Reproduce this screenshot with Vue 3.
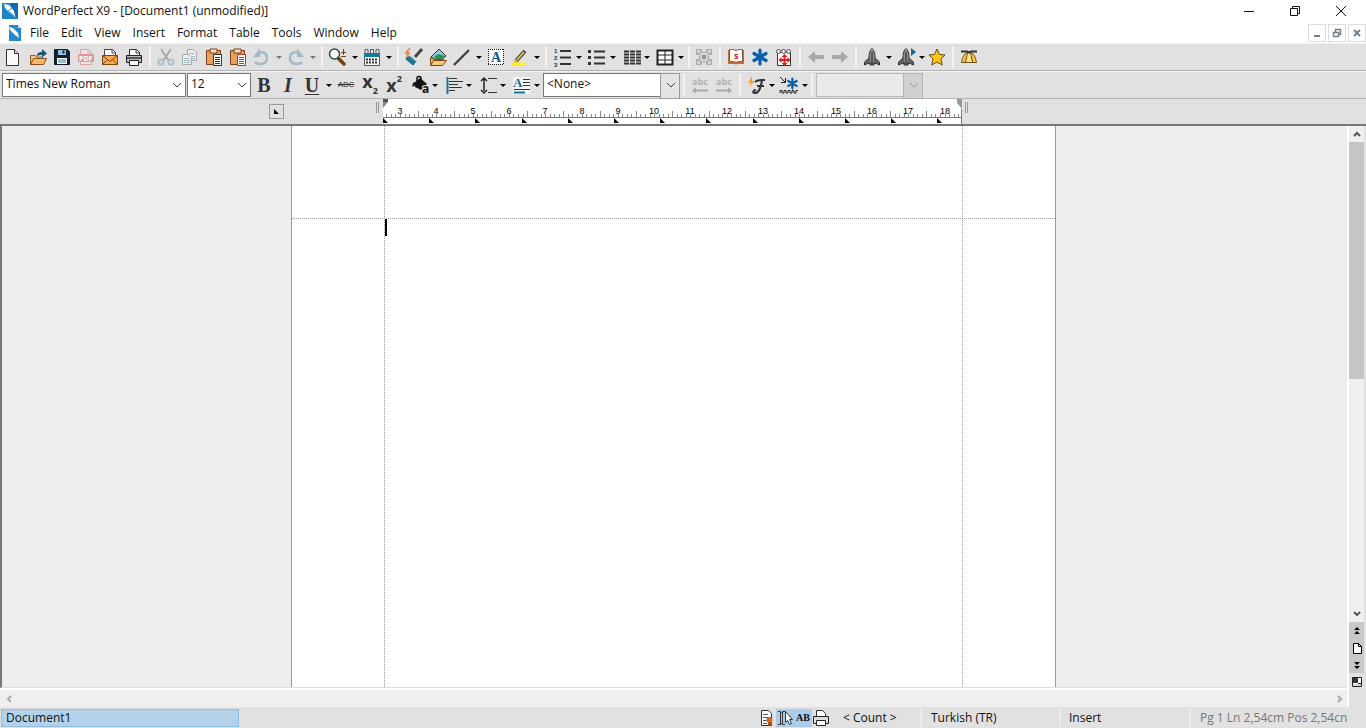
<script setup>
const menus = ['File', 'Edit', 'View', 'Insert', 'Format', 'Table', 'Tools', 'Window', 'Help']

const clip = (paper) => `<path d="M4.500 5.500h14v14h-14z" fill="#e9a05a" stroke="#7a3f14"/><path d="M8 4h7v4H8z" fill="#f6dfc2" stroke="#7a3f14"/><path d="M11.500 9.500h8v11h-8z" fill="#fff" stroke="${paper}"/><path d="M13 12.500h5M13 14.500h5M13 16.500h5M13 18.500h5" stroke="${paper}"/>`
const rocket = '<path d="M12 3.500c-3 3-3 6-3 10v5h6v-5c0-4 0-7-3-10z" fill="#8c8c8c" stroke="#333"/><path d="M9 13l-4.500 4v3l4.500-2M15 13l4.500 4v3L15 18M10 18h4v2h-4z" fill="#666" stroke="#333"/><path d="M12 7v10" stroke="#444" stroke-width="1.500"/>'
const star6 = '<path d="M12 5v14M6 8.500l12 7M18 8.500l-12 7" stroke="#0b5fa8" stroke-width="3.200" stroke-linecap="round"/>'

const icons = {
  blank: '<path d="M6.500 4.500h8l4 4v12h-12z" fill="#fafafa" stroke="#333"/><path d="M14.500 4.500v4h4" fill="#ddd" stroke="#333"/>',
  open: '<path d="M4.500 19.500v-9h5l1 1.500h6v3" fill="#f7c780" stroke="#8a5a22"/><path d="M4.500 19.500l3-6h13l-3 6z" fill="#f9b765" stroke="#8a4f16"/><path d="M11 11c0-3 2-4 5-4V4l5 4.500-5 4V10c-2 0-3 0-5 1z" fill="#14567c"/>',
  save: '<path d="M4.500 4.500h13l2 2v13h-15z" fill="#14202f" stroke="#111a28"/><path d="M8 5h8v5H8z" fill="#8fc4e0"/><path d="M12.500 5.500h2v3h-2z" fill="#14202f"/><path d="M7 13h10v6H7z" fill="#fff"/><path d="M8 15h8M8 17h8" stroke="#2d7aa8"/>',
  pdf: '<path d="M6.500 9V4.500h8l3 3V9M6.500 17v2.500h11V17" fill="#f3e3e3" stroke="#d9a9a9"/><path d="M14 4.500v3.500h3.500" fill="none" stroke="#d9a9a9"/><path d="M4 9h16v8H4z" fill="#dc9a9e"/><text x="5" y="16" font-size="7" font-weight="700" fill="#fff">PDF</text>',
  mail: '<path d="M6.500 12V4.500h8l3 3V12" fill="#fff" stroke="#444"/><path d="M14 4.500v3.500h3.500" fill="none" stroke="#444"/><path d="M4.500 10.500h15v9h-15z" fill="#f7a94b" stroke="#7c4314"/><path d="M4.500 10.500l7.500 6 7.500-6M4.500 19.500l5-5M19.500 19.500l-5-5" fill="none" stroke="#7c4314"/>',
  print: '<path d="M7.500 11V4.500h7l3 3V11" fill="#fff" stroke="#333"/><path d="M14 4.500v3.500h3.500" fill="none" stroke="#333"/><path d="M4.500 10.500h15v7h-15z" fill="#bcbcbc" stroke="#222"/><path d="M5 13h14" stroke="#555" stroke-width="2"/><path d="M7.500 15.500h9v5h-9z" fill="#fff" stroke="#222"/>',
  cut: '<path d="M7 4l8 12M17 4L9 16" stroke="#a9a9a9" stroke-width="2"/><circle cx="7" cy="17" r="2.500" fill="none" stroke="#a8c2ce" stroke-width="2"/><circle cx="17" cy="17" r="2.500" fill="none" stroke="#a8c2ce" stroke-width="2"/>',
  copy: '<path d="M9.500 4.500h6l3 3v8h-9z" fill="#eee" stroke="#a8a8a8"/><path d="M4.500 9.500h6l3 3v7h-9z" fill="#eee" stroke="#a8a8a8"/><path d="M6 13.500h5M6 15.500h6M6 17.500h6M11 8.500h5M14 11.500h3M14 13.500h3" stroke="#9fb9c5"/>',
  paste: clip('#333'),
  pasteRed: clip('#b5322b'),
  undo: '<path d="M10 3v9H3z" fill="#a5bac5"/><path d="M8 8c5-2 9 0 9 5 0 4-3 6-7 6-2 0-4-1-5-2" fill="none" stroke="#a5bac5" stroke-width="2.500"/>',
  redo: '<path d="M13 3v9h7z" fill="#a5bac5"/><path d="M15 8c-5-2-9 0-9 5 0 4 3 6 7 6 2 0 4-1 5-2" fill="none" stroke="#a5bac5" stroke-width="2.500"/>',
  zoom: '<path d="M12 13l6 6" stroke="#704019" stroke-width="3.500" stroke-linecap="round"/><circle cx="8.500" cy="9" r="5" fill="#f4fbff" stroke="#444" stroke-width="1.500"/><path d="M17.500 4v6M15 7.500h5M15 11.500h5" stroke="#704019"/>',
  calendar: '<path d="M4.500 8.500h15v12h-15z" fill="#f7fbfd" stroke="#555"/><path d="M4 8h16v4H4z" fill="#18799c"/><path d="M6 14.500h12M6 17.500h12" stroke="#333" stroke-width="2" stroke-dasharray="2 1"/><path d="M5 8V4.500h3V8M10.500 8V4.500h3V8M16 8V4.500h3V8" fill="#eee" stroke="#555"/>',
  brush: '<path d="M8 3L4 8h3l-3 5" fill="none" stroke="#ee8131" stroke-width="1.500"/><path d="M20 4l-7 8" stroke="#444" stroke-width="3"/><path d="M8 11l6 5-3 4-7-6z" fill="#178099" stroke="#0f5568"/><path d="M8 11l6 5" stroke="#c3e2ee"/>',
  picture: '<path d="M5 12l8-8 7 7-7 6z" fill="#88c9de" stroke="#333"/><path d="M8 12l4-3 3 1 4 1-6 5z" fill="#2f8e45"/><path d="M4.500 20.500v-8l4 2h9l-2 6z" fill="#f2b158" stroke="#7d4a19"/><path d="M7.500 15.500h13l-4 5h-12z" fill="#f8c675" stroke="#7d4a19"/>',
  line: '<path d="M4 20L19 5" stroke="#444" stroke-width="2.400"/>',
  textbox: '<path d="M4.500 4.500h15v15h-15z" fill="#fff"/><path d="M4 4.500h16M4 19.500h16M4.500 4v16M19.500 4v16" stroke="#111" stroke-dasharray="1 1"/><text x="7" y="17" font-family="Liberation Serif,serif" font-size="14" font-weight="700" fill="#12587d">A</text>',
  highlight: '<path d="M4 19h14" stroke="#ffee16" stroke-width="3"/><path d="M8 16l9-10" stroke="#444" stroke-width="4"/><path d="M9 15l7-8" stroke="#f5d44a" stroke-width="1.500"/><path d="M6 18l1-4 3 2z" fill="#eaaf19"/>',
  numbers: '<path d="M10 6h11M10 12.500h11M10 19h11" stroke="#333" stroke-width="2"/><g font-family="Liberation Sans" font-size="6" font-weight="700" fill="#333"><text x="4" y="8">1</text><text x="4" y="15">2</text><text x="4" y="22">3</text></g>',
  bullets: '<path d="M10 6.500h11M10 12.500h11M10 18.500h11" stroke="#333" stroke-width="2"/><path d="M4 6.500h3M4 12.500h3M4 18.500h3" stroke="#333" stroke-width="3"/>',
  columns: '<path d="M6 6.500h17M6 9.500h17M6 12.500h17M6 15.500h17M6 18.500h17" stroke="#333" stroke-width="2" stroke-dasharray="5 1"/>',
  table: '<path d="M5.500 5.500h15v14h-15z" fill="#fff" stroke="#222" stroke-width="2"/><path d="M13 5v15M6 10h15M6 15h15" stroke="#222"/>',
  reveal: '<path d="M4 4h16v16H4z" fill="#adadad"/><path d="M8 8h8v8H8zM5 5h3v3H5zM16 5h3v3h-3zM5 16h3v3H5zM16 16h3v3h-3z" fill="#d3d3d3"/><path d="M10 4v4l2-2 2 2V4M10 20v-4l2 2 2-2v4M4 10h4l-2 2 2 2H4M20 10h-4l2 2-2 2h4" fill="#e3e3e3"/><path d="M10 10h4v4h-4z" fill="#999"/>',
  book: '<path d="M4 5h16v14h-7l-1 1-1-1H4z" fill="#c96c32"/><path d="M5.500 4.500c3 0 5 0 6.500 1 1.500-1 3.500-1 6.500-1v12c-3 0-5 0-6.500 1-1.500-1-3.500-1-6.500-1z" fill="#fff" stroke="#8f4d27"/><text x="10" y="14" font-size="9" font-weight="700" fill="#d11d2e">s</text>',
  asterisk: star6,
  target: '<path d="M5.500 7.500h13v13h-13z" fill="#fff" stroke="#333"/><path d="M12.500 9l3 3h-2v2h2v-2l3 3-3 3v-2h-2v2h2l-3 3-3-3h2v-2h-2v2l-3-3 3-3v2h2v-2h-2z" fill="#db1e25"/><g fill="#eee" stroke="#555"><circle cx="6.500" cy="6.500" r="2"/><circle cx="11.500" cy="6.500" r="2"/><circle cx="16.500" cy="6.500" r="2"/></g>',
  back: '<path d="M4 12l7-6v4h9v4h-9v4z" fill="#a8a8a8"/>',
  forward: '<path d="M20 12l-7-6v4H4v4h9v4z" fill="#a8a8a8"/>',
  rocket,
  rocketPlay: rocket + '<path d="M17 3l5 4-5 4z" fill="#126a83"/>',
  star: '<path d="M12 4l2.500 5.500 5.500.5-4 4 1.200 6L12 17l-5.200 3L8 14l-4-4 5.500-.5z" fill="#ffc61a" stroke="#6b4b0c"/>',
  tent: '<path d="M4.500 17.500c1-6 3-10 7.500-10s6.500 4 7.500 10z" fill="#f5c443" stroke="#71541a"/><path d="M10.500 8L8.500 17M13.500 8l2 9" stroke="#71541a"/><path d="M11 9h2l1.500 8h-5z" fill="#fbe59b"/><path d="M4 6.500h6l2 1 2-1h6" fill="none" stroke="#333" stroke-width="2"/>',
  bucket: '<path d="M6 10l6-5 7 6-6 6-6-3z" fill="#111"/><path d="M9 9V5c0-2 4-2 4 0v3" fill="none" stroke="#111" stroke-width="1.500"/><path d="M6 9c-2 2-2 4-1 5 1-1 2-2 2-4z" fill="#111"/><text x="14" y="20" font-size="12" font-weight="700" fill="#111" stroke="#e1e1e1" stroke-width="2" paint-order="stroke">a</text>',
  align: '<path d="M5.500 4v17" stroke="#16769c" stroke-width="2"/><path d="M7 5.500h8M7 8.500h14M7 11.500h9M7 14.500h13M7 17.500h6" stroke="#333"/>',
  spacing: '<path d="M8 6v12M5 8l3-3 3 3M5 17l3 3 3-3" fill="none" stroke="#222" stroke-width="1.500"/><path d="M12 5.500h9M12 19.500h9" stroke="#333"/>',
  paraStyle: '<path d="M3 4h17v17H3z" fill="#f8f8f8"/><text x="3" y="14" font-family="Liberation Serif,serif" font-size="13" font-weight="700" fill="#1b6993">A</text><path d="M13 6.500h7M13 9.500h7M13 12.500h7M4 16.500h16" stroke="#333"/><path d="M4 19.500h11" stroke="#16769c" stroke-width="2"/>',
  abcLeft: '<text x="4" y="12" font-size="9" font-weight="700" fill="#b2b2b2">abc</text><path d="M4 17.500l4-3v2h12v2H8v2z" fill="#a8a8a8"/>',
  abcRight: '<text x="4" y="12" font-size="9" font-weight="700" fill="#b2b2b2">abc</text><path d="M20 17.500l-4-3v2H4v2h12v2z" fill="#a8a8a8"/>',
  quickPen: '<path d="M8 3L4 10h3l-2 4 6-6H8z" fill="#f6a52b"/><path d="M11 9c3-3 6-2 10-2M18 7c-1 7-3 13-7 13-3 0-2-3 1-3M13 13h7" fill="none" stroke="#333" stroke-width="2"/>',
  correct: '<g transform="translate(7 2) scale(.7)">' + star6 + '</g><path d="M3 4l5 5M8.500 5v4.500H4" fill="none" stroke="#222"/><path d="M3 20v-2.500h2V20h2v-2.500h2V20h2v-2.500h2V20h2v-2.500h2V20h2v-2.500h2" fill="none" stroke="#222"/>',
}

const mainTools = [
  { n: 'New', i: 'blank' }, { gap: 1 }, { n: 'Open', i: 'open' }, { n: 'Save', i: 'save' }, { n: 'Publish to PDF', i: 'pdf' }, { n: 'Mail', i: 'mail' }, { n: 'Print', i: 'print' },
  { sep: 1 }, { n: 'Cut', i: 'cut' }, { n: 'Copy', i: 'copy' }, { n: 'Paste', i: 'paste' }, { n: 'Paste unformatted', i: 'pasteRed' },
  { n: 'Undo', i: 'undo', a: 'dim' }, { n: 'Redo', i: 'redo', a: 'dim' },
  { sep: 1 }, { n: 'Zoom', i: 'zoom', a: 'dark' }, { n: 'Calendar', i: 'calendar', a: 'dark' },
  { sep: 1 }, { n: 'QuickFormat', i: 'brush' }, { n: 'Picture', i: 'picture' }, { n: 'Line', i: 'line', a: 'dark' }, { n: 'Text box', i: 'textbox' }, { n: 'Highlight', i: 'highlight', a: 'dark' },
  { sep: 1 }, { n: 'Numbering', i: 'numbers', a: 'dark' }, { n: 'Bullets', i: 'bullets', a: 'dark' }, { n: 'Columns', i: 'columns', a: 'dark' }, { n: 'Insert table', i: 'table', a: 'dark' },
  { sep: 1, tight: 1 }, { n: 'Reveal', i: 'reveal' },
  { sep: 1 }, { n: 'Dictionary', i: 'book' }, { n: 'Assistant', i: 'asterisk' }, { n: 'Target', i: 'target' },
  { sep: 1 }, { n: 'Back', i: 'back' }, { n: 'Forward', i: 'forward' },
  { sep: 1 }, { n: 'Launch', i: 'rocket', a: 'dark' }, { n: 'Launch next', i: 'rocketPlay', a: 'dark', tight: 1 }, { n: 'Favorite', i: 'star' },
  { sep: 1 }, { n: 'Workspace', i: 'tent' },
]

const formatA = [
  { n: 'Bold', t: 'B', c: 'bold' }, { n: 'Italic', t: 'I', c: 'italic' }, { n: 'Underline', t: 'U', c: 'under', a: 'dark' },
  { n: 'Strikethrough', t: 'ABC', c: 'strike' }, { n: 'Subscript', t: 'x', s: '2', c: 'subs' }, { n: 'Superscript', t: 'x', s: '2', c: 'sups' },
  { n: 'Text color', i: 'bucket', a: 'dark' }, { n: 'Justification', i: 'align', a: 'dark' }, { n: 'Line spacing', i: 'spacing', a: 'dark' }, { n: 'Paragraph style', i: 'paraStyle', a: 'dark' },
]
const formatB = [
  { sep: 1 }, { n: 'Previous word', i: 'abcLeft' }, { n: 'Next word', i: 'abcRight' },
  { sep: 1 }, { n: 'QuickFonts', i: 'quickPen', a: 'dark', tight: 1 }, { gap: 1 }, { n: 'Prompt-as-you-go', i: 'correct', a: 'dark', tight: 1 },
  { sep: 1 },
]

const cm = 36.3
const ticks = Array.from({ length: 127 }, (_, k) => {
  const n = k - 3
  return { x: Math.round(17 + (n * cm) / 8) + 0.5, half: ((n % 8) + 8) % 8 === 4 }
}).filter((t) => t.x > 1 && t.x < 577)
const labels = Array.from({ length: 16 }, (_, k) => ({ n: k + 3, x: Math.round(17 + k * cm) }))
const tabs = Array.from({ length: 13 }, (_, k) => Math.round(k * 46.2))
</script>

<template>
  <div class="app">
    <header class="title">
      <svg class="logo" viewBox="0 0 16 16"><path d="M0 0h16v16H0z" fill="#1e84c6" /><path d="M8 0h8v16z" fill="#1268aa" /><path d="M2 1l5 1 5 6 1 6-5-4-5-5z" fill="#fff" /><path d="M6 7l6 6M7 7l3-2" stroke="#4a9bd1" /></svg>
      <span class="caption">WordPerfect X9 - [Document1 (unmodified)]</span>
      <button class="win" aria-label="Minimize"><svg viewBox="0 0 12 12"><path d="M1 6.500h10" stroke="#111" /></svg></button>
      <button class="win" aria-label="Restore"><svg viewBox="0 0 12 12"><path d="M1.500 3.500h7v7h-7zM3.500 3V1.500h7v7H9" fill="none" stroke="#111" /></svg></button>
      <button class="win" aria-label="Close"><svg viewBox="0 0 12 12"><path d="M1 1l10 10M11 1L1 11" stroke="#111" /></svg></button>
    </header>

    <nav class="menu">
      <svg class="doclogo" viewBox="0 0 14 16"><path d="M1 0h9l3 3v13H1z" fill="#2589c9" /><path d="M10 0v3h3z" fill="#d5e8f4" /><path d="M1 2l4 1 5 5 1 5-4-3-5-5z" fill="#fff" /></svg>
      <button v-for="m in menus" :key="m">{{ m }}</button>
      <span class="fill"></span>
      <span class="mdi">
        <button aria-label="Minimize document"><svg viewBox="0 0 10 10"><path d="M2 8h6" stroke="#75808a" stroke-width="2" /></svg></button>
        <button aria-label="Restore document"><svg viewBox="0 0 10 10"><path d="M1.500 4.500h5v4h-5zM3.500 4V1.500h5v5H7" fill="none" stroke="#75808a" stroke-width="1.500" /></svg></button>
        <button aria-label="Close document"><svg viewBox="0 0 10 10"><path d="M2 2l6 6M8 2L2 8" stroke="#75808a" stroke-width="2" /></svg></button>
      </span>
    </nav>

    <div class="bar" role="toolbar" aria-label="Main">
      <template v-for="(t, k) in mainTools" :key="k">
        <i v-if="t.sep" class="sep" :class="{ tight: t.tight }"></i>
        <i v-else-if="t.gap" class="gap"></i>
        <button v-else class="tool" :aria-label="t.n">
          <svg class="ico" viewBox="0 0 24 24" v-html="icons[t.i]"></svg>
          <span v-if="t.a" class="arrow" :class="[t.a, { tight: t.tight }]"></span>
        </button>
      </template>
    </div>

    <div class="bar format" role="toolbar" aria-label="Format">
      <label class="combo font"><select aria-label="Font"><option>Times New Roman</option></select><svg viewBox="0 0 10 6"><path d="M1 1l4 4 4-4" /></svg></label>
      <label class="combo size"><select aria-label="Font size"><option>12</option></select><svg viewBox="0 0 10 6"><path d="M1 1l4 4 4-4" /></svg></label>
      <button v-for="t in formatA" :key="t.n" class="tool" :class="{ shift: t.i }" :aria-label="t.n">
        <svg v-if="t.i" class="ico" viewBox="0 0 24 24" v-html="icons[t.i]"></svg>
        <span v-else class="glyph" :class="t.c">{{ t.t }}<small v-if="t.s">{{ t.s }}</small></span>
        <span v-if="t.a" class="arrow" :class="t.a"></span>
      </button>
      <label class="combo style"><select aria-label="Style"><option>&lt;None&gt;</option></select><svg viewBox="0 0 10 6"><path d="M1 1l4 4 4-4" /></svg></label>
      <template v-for="(t, k) in formatB" :key="k">
        <i v-if="t.sep" class="sep"></i>
        <i v-else-if="t.gap" class="gap"></i>
        <button v-else class="tool" :aria-label="t.n">
          <svg class="ico" viewBox="0 0 24 24" v-html="icons[t.i]"></svg>
          <span v-if="t.a" class="arrow" :class="[t.a, { tight: t.tight }]"></span>
        </button>
      </template>
      <label class="combo off"><select aria-label="Prompt" disabled><option></option></select><svg viewBox="0 0 10 6"><path d="M1 1l4 4 4-4" /></svg></label>
    </div>

    <div class="ruler">
      <div class="rleft">
        <button class="tabtype" aria-label="Tab type"><svg viewBox="0 0 13 13"><path d="M4 4v5h5z" fill="#000" /></svg></button>
        <i class="grip"></i>
      </div>
      <svg class="scale" viewBox="0 0 579 25">
        <path d="M0 0h579v25H0z" fill="#fff" />
        <path v-for="t in ticks" :key="t.x" :d="`M${t.x} ${t.half ? 12 : 15}V18`" stroke="#8a8a8a" />
        <path d="M0 18.500h579" stroke="#777" />
        <text v-for="l in labels" :key="l.n" :x="l.x" y="15" text-anchor="middle">{{ l.n }}</text>
        <path v-for="x in tabs" :key="x" :d="`M${x} 19v5h5z`" fill="#000" />
        <path d="M0 0h5v3L0 9z" fill="#888" /><path d="M0 0h5v3H0z" fill="#555" />
        <path d="M574 0h5v10l-5-6z" fill="#999" />
        <path d="M578.500 10v15" stroke="#777" />
      </svg>
      <div class="rright"><i class="grip"></i></div>
    </div>

    <div class="work">
      <div class="left">
        <main class="canvas">
          <div class="page"><div class="margins"><div class="top"></div><div class="body"><i class="caret"></i></div></div></div>
        </main>
        <div class="hscroll">
          <button aria-label="Scroll left"><svg viewBox="0 0 8 10"><path d="M6 2L3 5l3 3" /></svg></button>
          <button aria-label="Scroll right"><svg viewBox="0 0 8 10"><path d="M2 2l3 3-3 3" /></svg></button>
        </div>
      </div>
      <aside class="vscroll">
        <button class="end" aria-label="Scroll up"><svg viewBox="0 0 10 8"><path d="M2 6l3-3 3 3" /></svg></button>
        <div class="track"><div class="thumb"></div></div>
        <button class="end" aria-label="Scroll down"><svg viewBox="0 0 10 8"><path d="M2 2l3 3 3-3" /></svg></button>
        <div class="browse">
          <button aria-label="Previous page"><svg viewBox="0 0 12 12"><path d="M3 5l3-3 3 3zM3 9l3-3 3 3z" fill="#000" /></svg></button>
          <button aria-label="Browse by page"><svg viewBox="0 0 12 12"><path d="M2.500 1.500h5l3 3v7h-8z" fill="#fff" stroke="#000" /><path d="M7.500 1.500v3h3" fill="none" stroke="#000" /></svg></button>
          <button aria-label="Next page"><svg viewBox="0 0 12 12"><path d="M3 3l3 3 3-3zM3 7l3 3 3-3z" fill="#000" /></svg></button>
        </div>
        <button class="split" aria-label="Split view"><svg viewBox="0 0 12 12"><path d="M1.500 1.500h9v9h-9z" fill="#fff" stroke="#222" /><path d="M2 2h5v5H2z" fill="#333" /><path d="M7 7.500h4" stroke="#222" /><path d="M2 9h8" stroke="#aaa" /></svg></button>
      </aside>
    </div>

    <footer class="status">
      <button class="doc">Document1</button>
      <span class="fill"></span>
      <button class="sic" aria-label="Document properties"><svg viewBox="0 0 18 18"><path d="M3.500 1.500h7l3 3v12h-10z" fill="#fff" stroke="#333" /><path d="M5 5.500h5M5 8.500h7M5 11.500h4M5 14.500h4" stroke="#555" /><circle cx="11.500" cy="11" r="3" fill="#cf6a20" /><path d="M10 13h4v4l-2-1-2 1z" fill="#b5501a" /></svg></button>
      <button class="sic on" aria-label="Shadow cursor"><svg viewBox="0 0 18 18"><path d="M2 2.500h2.500l1 1 1-1H9M2 15.500h2.500l1-1 1 1H9M4.500 3v12M6.500 3v12" fill="none" stroke="#333" /><path d="M9.500 2.500v11l2-2 2 4 2-1-2-4h3z" fill="#fff" stroke="#333" /></svg></button>
      <button class="sic on ab" aria-label="Caps lock">AB</button>
      <button class="sic" aria-label="Printer"><svg viewBox="0 0 18 18"><path d="M4.500 8V1.500h6l3 3V8" fill="#fff" stroke="#333" /><path d="M1.500 7.500h15v7h-15z" fill="#ddd" stroke="#222" /><path d="M4.500 11.500h9v5h-9z" fill="#fff" stroke="#222" /></svg></button>
      <button class="cell count">&lt; Count &gt;</button>
      <button class="cell lang">Turkish (TR)</button>
      <button class="cell mode">Insert</button>
      <button class="cell pos">Pg 1 Ln 2,54cm Pos 2,54cn</button>
    </footer>
  </div>
</template>

<style>
html, body { margin: 0; overflow: hidden; }
</style>

<style scoped>
.app { height: 100vh; display: flex; flex-direction: column; background: #e1e1e1; color: #111; font: 12px/16px "Open Sans", "Noto Sans", sans-serif; }
.app * { box-sizing: border-box; }
button { border: 0; background: none; padding: 0; margin: 0; font: inherit; color: inherit; }
svg { display: block; flex: none; }
.fill { flex: 1; }

.title { height: 22px; display: flex; align-items: center; background: #fff; flex: none; }
.logo { width: 16px; height: 16px; margin: 0 5px 0 2px; }
.caption { flex: 1; white-space: nowrap; }
.win { width: 46px; height: 20px; display: flex; align-items: center; justify-content: center; }
.win svg { width: 12px; height: 12px; }
.title .win:last-child { margin-right: 2px; }

.menu { height: 21px; display: flex; align-items: center; background: #fff; flex: none; padding-left: 8px; }
.menu > button { margin-right: 12px; }
.doclogo { width: 14px; height: 16px; margin-right: 8px; }
.mdi { display: flex; gap: 2px; }
.mdi button { width: 18px; height: 18px; border: 1px solid #dcdcdc; display: flex; align-items: center; justify-content: center; }
.mdi svg { width: 10px; height: 10px; }

.bar { height: 28px; flex: none; display: flex; align-items: center; border-top: 1px solid #f2f2f2; border-bottom: 1px solid #b4b4b4; }
.tool { display: flex; align-items: center; height: 24px; flex: none; }
.ico { width: 24px; height: 24px; overflow: visible; font-family: "Open Sans", sans-serif; fill: none; }
.sep { width: 8px; height: 22px; flex: none; display: flex; justify-content: center; }
.sep::before { content: ""; width: 2px; background: #f2f2f2; }
.sep.tight { width: 6px; }
.gap { width: 2px; flex: none; }
.arrow { width: 10px; height: 24px; display: flex; align-items: center; justify-content: center; }
.arrow::before { content: ""; border: 3px solid transparent; border-top-color: #777; border-bottom: 0; }
.arrow.dark::before { border-top-color: #000; }
.arrow.tight { width: 7px; }

.format { padding-left: 2px; }
.combo { position: relative; height: 24px; flex: none; margin-right: 1px; }
.combo select { appearance: none; width: 100%; height: 24px; border: 1px solid #777; border-radius: 0; background: #fff; color: #111; font: inherit; padding: 0 20px 2px 3px; }
.combo svg { position: absolute; right: 4px; top: 9px; width: 10px; height: 6px; fill: none; stroke: #444; }
.font { width: 184px; }
.size { width: 64px; }
.style { width: 137px; margin: 0 0 0 1px; }
.off { width: 107px; margin: 0; }
.style::after, .off::after { content: ""; position: absolute; right: 0; top: 0; width: 18px; height: 24px; border: 1px solid #999; background: #e4e4e4; }
.style svg, .off svg { z-index: 1; }
.off select { background: #efefef; border-color: #aaa; }
.off::after { background: #d0d0d0; border-color: #b4b4b4; }
.off svg { stroke: #999; }
.shift .ico { margin: 0 -2px 0 2px; }
.glyph { width: 24px; height: 24px; display: flex; align-items: center; justify-content: center; color: #333; font: bold 20px/24px "Liberation Serif", serif; }
.italic { font-style: italic; }
.under { text-decoration: underline; text-decoration-thickness: 1px; text-underline-offset: 2px; }
.strike { font: 8px/12px "Liberation Sans", sans-serif; text-decoration: line-through; }
.subs, .sups { font: bold 18px/20px "Open Sans", sans-serif; }
.subs { align-items: flex-start; line-height: 16px; }
.sups { align-items: flex-end; line-height: 24px; }
.subs small, .sups small { font-size: 9px; line-height: 12px; }
.subs small { align-self: flex-end; }
.sups small { align-self: flex-start; }

.ruler { height: 27px; flex: none; display: grid; grid-template-columns: 1fr 579px 1fr; padding-right: 21px; border-bottom: 2px solid #777; }
.rleft { display: flex; justify-content: flex-end; gap: 92px; padding-right: 4px; }
.tabtype { width: 15px; height: 15px; margin-top: 5px; border: 1px solid #999; }
.tabtype svg { width: 13px; height: 13px; }
.grip { width: 3px; height: 11px; margin-top: 3px; border: solid #999; border-width: 0 1px; }
.rright { padding-left: 3px; display: flex; }
.scale { width: 579px; height: 25px; font: 9px "Liberation Sans", sans-serif; fill: #000; }

.work { flex: 1; min-height: 0; display: flex; }
.left { flex: 1; display: flex; flex-direction: column; min-width: 0; }
.canvas { flex: 1; min-height: 0; display: flex; justify-content: center; background: #eee; border-left: 2px solid #777; padding-right: 3px; border-bottom: 1px solid #ddd; }
.page { width: 765px; background: #fff; border: solid #999; border-width: 0 1px; display: flex; flex-direction: column; }
.margins { flex: 1; display: flex; flex-direction: column; background: repeating-linear-gradient(#999 0 1px, transparent 1px 2px) 92px 0 / 1px 100% no-repeat, repeating-linear-gradient(#999 0 1px, transparent 1px 2px) 670px 0 / 1px 100% no-repeat; }
.top { height: 93px; border-bottom: 1px dotted #999; }
.body { flex: 1; padding-left: 93px; }
.caret { display: block; width: 2px; height: 17px; background: #000; }
.hscroll { height: 19px; border-top: 2px solid #fff; background: #efefef; display: flex; align-items: center; justify-content: space-between; padding: 0 3px 0 5px; }
.hscroll svg { width: 8px; height: 10px; fill: none; stroke: #aaa; stroke-width: 2; }
.vscroll { width: 19px; border-left: 2px solid #fff; padding-right: 2px; display: flex; flex-direction: column; flex: none; }
.vscroll button { display: flex; align-items: center; justify-content: center; flex: none; width: 100%; }
.end { height: 16px; background: #f0f0f0; }
.end svg { width: 10px; height: 8px; fill: none; stroke: #555; stroke-width: 2; }
.track { flex: 1; background: #f0f0f0; }
.thumb { height: 51%; background: #c5c5c5; }
.browse { background: #c8c8c8; }
.browse button { height: 17px; }
.browse svg, .split svg { width: 12px; height: 12px; }
.split { height: 34px; padding-bottom: 17px; background: #e1e1e1; }

.status { height: 21px; flex: none; display: flex; align-items: center; padding: 1px 1px 0; }
.doc { width: 238px; height: 18px; border: 1px solid #8dbde2; background: #b3d1e8; text-align: left; padding-left: 4px; }
.sic { width: 18px; height: 18px; display: flex; align-items: center; justify-content: center; }
.sic svg { width: 18px; height: 18px; }
.on { background: #a9cdea; }
.ab { font: bold 10px/16px "Liberation Serif", serif; }
.cell { height: 18px; text-align: left; padding-left: 9px; border-left: 2px solid #ececec; white-space: nowrap; }
.count { width: 90px; border: 0; padding-left: 13px; }
.lang { width: 139px; }
.mode { width: 130px; padding-left: 8px; }
.pos { width: 176px; padding-left: 9px; color: #777; }
</style>
